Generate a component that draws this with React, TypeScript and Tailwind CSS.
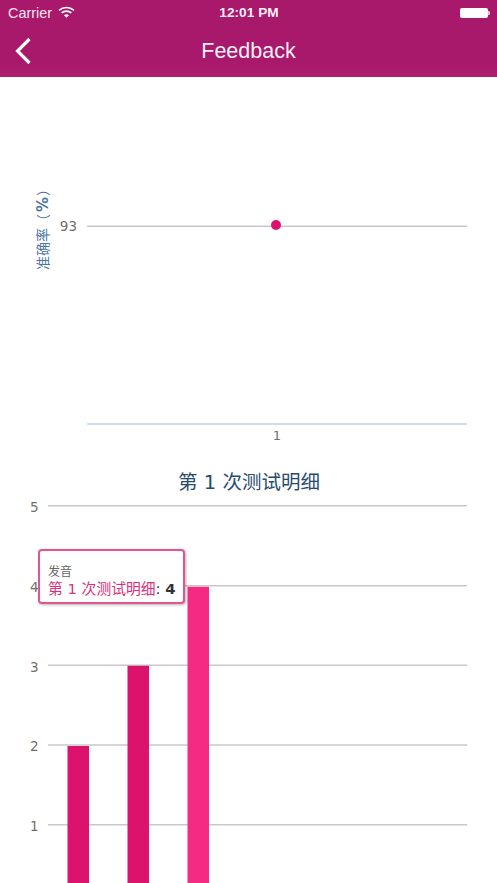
const sans = "font-['Liberation_Sans',Arial,sans-serif]";
const chartFont = "'DejaVu Sans','Noto Sans CJK SC',sans-serif";

function StatusBar() {
  return (
    <div className={`flex h-[26px] items-center justify-between pl-[8px] pr-[7px] text-white ${sans}`}>
      <div className="flex w-[120px] items-center gap-[6px]">
        <span className="text-[14.4px] leading-none text-white/90">Carrier</span>
        <svg width="17" height="12" viewBox="0 0 17 12" className="-mt-[2px]">
          <path d="M1 4.4C5.2.6 11.8.6 16 4.4" fill="none" stroke="white" strokeWidth="1.6" />
          <path d="M3.6 6.9c2.8-2.4 7-2.4 9.8 0" fill="none" stroke="white" strokeWidth="1.6" />
          <path d="M6 9.2c1.5-1.2 3.5-1.2 5 0l-2.5 2.6z" fill="white" />
        </svg>
      </div>
      <span className="text-[13.7px] font-bold leading-none text-white/95">12:01 PM</span>
      <div className="flex w-[120px] items-center justify-end">
        <div className="h-[10px] w-[28px] rounded-[2px] bg-white" />
        <div className="h-[4px] w-[2px] rounded-r-[1px] bg-white/70" />
      </div>
    </div>
  );
}

function NavBar() {
  return (
    <div className="relative flex h-[51px] items-center justify-center">
      <svg width="18" height="28" viewBox="0 0 18 28" className="absolute left-[14px] top-[11px]">
        <path d="M15.5 2 L3.5 14 L15.5 26" fill="none" stroke="white" strokeWidth="3.2" />
      </svg>
      <span className={`text-[21.5px] leading-none text-white/95 ${sans}`}>Feedback</span>
    </div>
  );
}

function AccuracyChart() {
  return (
    <svg width="497" height="372" viewBox="0 0 497 372" className="block" style={{ fontFamily: chartFont }}>
      <text transform="translate(48 193) rotate(-90)" fontSize="14" fill="#4d759e">
        准确率（<tspan fontWeight="bold" fontSize="15" dx="2">%</tspan><tspan dx="1">）</tspan>
      </text>
      <line x1="87" x2="467" y1="149.2" y2="149.2" stroke="#c8c8c8" strokeWidth="1.4" />
      <text x="77" y="154" textAnchor="end" fontSize="13.5" fill="#707070">93</text>
      <circle cx="276" cy="148" r="5" fill="#dc136c" />
      <line x1="87" x2="467" y1="347" y2="347" stroke="#c0d0e0" strokeWidth="1.4" />
      <text x="277" y="363" textAnchor="middle" fontSize="13" fill="#707070">1</text>
    </svg>
  );
}

const ticks = [
  { label: "5", y: 41.7 },
  { label: "4", y: 121.8 },
  { label: "3", y: 201.2 },
  { label: "2", y: 281 },
  { label: "1", y: 360.7 },
];

const bars = [
  { x: 67.5, y: 282, fill: "#dc136c" },
  { x: 127.5, y: 201.8, fill: "#dc136c" },
  { x: 187.5, y: 122.8, fill: "#f52a83" },
];

function DetailChart() {
  return (
    <div className="relative">
      <svg width="497" height="419" viewBox="0 0 497 419" className="block" style={{ fontFamily: chartFont }}>
        <text x="249" y="24.5" textAnchor="middle" fontSize="19.5" fill="#274b6d">第 1 次测试明细</text>
        {ticks.map((t) => (
          <g key={t.label}>
            <line x1="48" x2="467" y1={t.y} y2={t.y} stroke="#c8c8c8" strokeWidth="1.4" />
            <text x="38.5" y={t.y + 6.3} textAnchor="end" fontSize="13.5" fill="#707070">{t.label}</text>
          </g>
        ))}
        {bars.map((b) => (
          <rect key={b.x} x={b.x} y={b.y} width="21.5" height={419 - b.y} fill={b.fill} />
        ))}
      </svg>
      <div
        className="absolute left-[38px] top-[85px] h-[55px] w-[147px] rounded-[4px] border-2 border-[#e3558f] bg-white pl-[8px] pt-[14px] shadow-[1px_1px_3px_rgba(0,0,0,0.3)]"
        style={{ fontFamily: chartFont }}
      >
        <div className="text-[12px] leading-[14px] text-[#666666]">发音</div>
        <div className="mt-[1px] whitespace-nowrap text-[14.8px] leading-[18px] text-[#333333]">
          <span className="text-[#e0307a]">第 1 次测试明细</span>: <b>4</b>
        </div>
      </div>
    </div>
  );
}

export default function App() {
  return (
    <div className="h-[883px] w-[497px] overflow-hidden bg-white">
      <header className="h-[77px] bg-gradient-to-b from-[#a8186b] from-80% to-[#b02070]">
        <StatusBar />
        <NavBar />
      </header>
      <main>
        <AccuracyChart />
        <div className="h-[15px]" />
        <DetailChart />
      </main>
    </div>
  );
}
